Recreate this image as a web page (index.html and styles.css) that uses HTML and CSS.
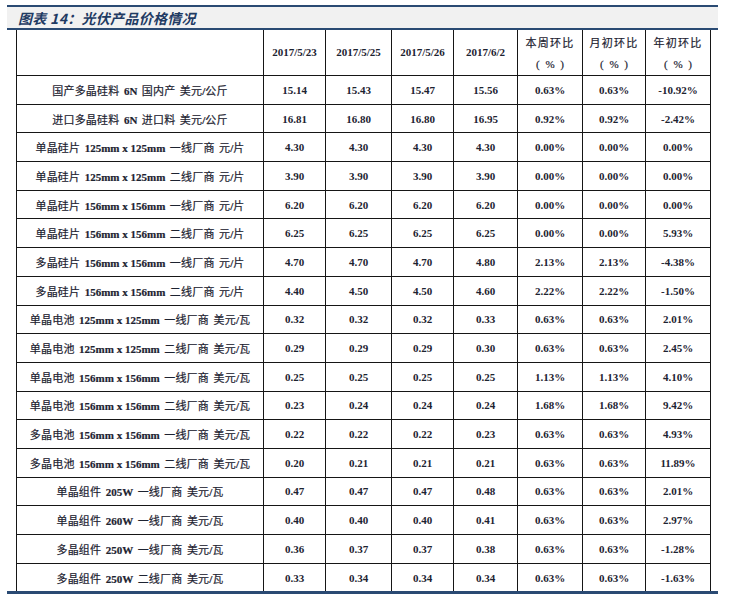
FILE: index.html
```html
<!DOCTYPE html>
<html lang="zh-CN">
<head>
<meta charset="utf-8">
<title>图表14：光伏产品价格情况</title>
<link rel="stylesheet" href="styles.css">
</head>
<body>
<div class="figure">
  <div class="title-band"><span class="title">图表 14：光伏产品价格情况</span></div>
  <table class="prices">
    <colgroup>
      <col class="c-label"><col class="c-d1"><col class="c-d2"><col class="c-d3"><col class="c-d4"><col class="c-p1"><col class="c-p2"><col class="c-p3">
    </colgroup>
    <thead>
      <tr class="head">
        <th></th>
        <th class="num">2017/5/23</th>
        <th class="num">2017/5/25</th>
        <th class="num">2017/5/26</th>
        <th class="num">2017/6/2</th>
        <th class="cn">本周环比<br><span class="pct">( % )</span></th>
        <th class="cn">月初环比<br><span class="pct">( % )</span></th>
        <th class="cn">年初环比<br><span class="pct">( % )</span></th>
      </tr>
    </thead>
    <tbody>
      <tr><td class="label">国产多晶硅料 <b>6N</b> 国内产 美元<b>/</b>公斤</td><td>15.14</td><td>15.43</td><td>15.47</td><td>15.56</td><td>0.63%</td><td>0.63%</td><td>-10.92%</td></tr>
      <tr><td class="label">进口多晶硅料 <b>6N</b> 进口料 美元<b>/</b>公斤</td><td>16.81</td><td>16.80</td><td>16.80</td><td>16.95</td><td>0.92%</td><td>0.92%</td><td>-2.42%</td></tr>
      <tr><td class="label">单晶硅片 <b>125mm x 125mm</b> 一线厂商 元<b>/</b>片</td><td>4.30</td><td>4.30</td><td>4.30</td><td>4.30</td><td>0.00%</td><td>0.00%</td><td>0.00%</td></tr>
      <tr><td class="label">单晶硅片 <b>125mm x 125mm</b> 二线厂商 元<b>/</b>片</td><td>3.90</td><td>3.90</td><td>3.90</td><td>3.90</td><td>0.00%</td><td>0.00%</td><td>0.00%</td></tr>
      <tr><td class="label">单晶硅片 <b>156mm x 156mm</b> 一线厂商 元<b>/</b>片</td><td>6.20</td><td>6.20</td><td>6.20</td><td>6.20</td><td>0.00%</td><td>0.00%</td><td>0.00%</td></tr>
      <tr><td class="label">单晶硅片 <b>156mm x 156mm</b> 二线厂商 元<b>/</b>片</td><td>6.25</td><td>6.25</td><td>6.25</td><td>6.25</td><td>0.00%</td><td>0.00%</td><td>5.93%</td></tr>
      <tr><td class="label">多晶硅片 <b>156mm x 156mm</b> 一线厂商 元<b>/</b>片</td><td>4.70</td><td>4.70</td><td>4.70</td><td>4.80</td><td>2.13%</td><td>2.13%</td><td>-4.38%</td></tr>
      <tr><td class="label">多晶硅片 <b>156mm x 156mm</b> 二线厂商 元<b>/</b>片</td><td>4.40</td><td>4.50</td><td>4.50</td><td>4.60</td><td>2.22%</td><td>2.22%</td><td>-1.50%</td></tr>
      <tr><td class="label">单晶电池 <b>125mm x 125mm</b> 一线厂商 美元<b>/</b>瓦</td><td>0.32</td><td>0.32</td><td>0.32</td><td>0.33</td><td>0.63%</td><td>0.63%</td><td>2.01%</td></tr>
      <tr><td class="label">单晶电池 <b>125mm x 125mm</b> 二线厂商 美元<b>/</b>瓦</td><td>0.29</td><td>0.29</td><td>0.29</td><td>0.30</td><td>0.63%</td><td>0.63%</td><td>2.45%</td></tr>
      <tr><td class="label">单晶电池 <b>156mm x 156mm</b> 一线厂商 美元<b>/</b>瓦</td><td>0.25</td><td>0.25</td><td>0.25</td><td>0.25</td><td>1.13%</td><td>1.13%</td><td>4.10%</td></tr>
      <tr><td class="label">单晶电池 <b>156mm x 156mm</b> 二线厂商 美元<b>/</b>瓦</td><td>0.23</td><td>0.24</td><td>0.24</td><td>0.24</td><td>1.68%</td><td>1.68%</td><td>9.42%</td></tr>
      <tr><td class="label">多晶电池 <b>156mm x 156mm</b> 一线厂商 美元<b>/</b>瓦</td><td>0.22</td><td>0.22</td><td>0.22</td><td>0.23</td><td>0.63%</td><td>0.63%</td><td>4.93%</td></tr>
      <tr><td class="label">多晶电池 <b>156mm x 156mm</b> 二线厂商 美元<b>/</b>瓦</td><td>0.20</td><td>0.21</td><td>0.21</td><td>0.21</td><td>0.63%</td><td>0.63%</td><td>11.89%</td></tr>
      <tr><td class="label">单晶组件 <b>205W</b> 一线厂商 美元<b>/</b>瓦</td><td>0.47</td><td>0.47</td><td>0.47</td><td>0.48</td><td>0.63%</td><td>0.63%</td><td>2.01%</td></tr>
      <tr><td class="label">单晶组件 <b>260W</b> 一线厂商 美元<b>/</b>瓦</td><td>0.40</td><td>0.40</td><td>0.40</td><td>0.41</td><td>0.63%</td><td>0.63%</td><td>2.97%</td></tr>
      <tr><td class="label">多晶组件 <b>250W</b> 一线厂商 美元<b>/</b>瓦</td><td>0.36</td><td>0.37</td><td>0.37</td><td>0.38</td><td>0.63%</td><td>0.63%</td><td>-1.28%</td></tr>
      <tr><td class="label">多晶组件 <b>250W</b> 二线厂商 美元<b>/</b>瓦</td><td>0.33</td><td>0.34</td><td>0.34</td><td>0.34</td><td>0.63%</td><td>0.63%</td><td>-1.63%</td></tr>
    </tbody>
  </table>
  <div class="bottom-rule"></div>
</div>
</body>
</html>
```
FILE: styles.css
```css
html, body {
  margin: 0;
  padding: 0;
  background: #ffffff;
}

.figure {
  margin: 5px 0 0 7px;
  width: 711px;
}

.title-band {
  height: 21px;
  background: #f1f1f1;
  border-top: 2px solid #2a4a73;
  border-bottom: 2px solid #2a4a73;
  display: flex;
  align-items: center;
  padding-left: 11px;
}

.title {
  font-family: "Noto Sans CJK SC", "Liberation Serif", sans-serif;
  font-size: 14px;
  font-style: italic;
  font-weight: 700;
  color: #1f3b63;
  line-height: 1;
  letter-spacing: 0.3px;
}

.prices {
  margin-left: 9px;
  width: 694px;
  border-collapse: collapse;
  table-layout: fixed;
  font-family: "Liberation Serif", "Noto Sans CJK SC", serif;
  font-size: 11px;
  color: #1d2331;
}

.c-label { width: 247px; }
.c-d1 { width: 62px; }
.c-d2 { width: 66px; }
.c-d3 { width: 62px; }
.c-d4 { width: 64px; }
.c-p1 { width: 65px; }
.c-p2 { width: 63px; }
.c-p3 { width: 65px; }

.prices th,
.prices td {
  border: 1px solid #161616;
  padding: 0;
  text-align: center;
  vertical-align: middle;
}

.prices thead th {
  border-top: none;
}

.prices tbody tr:last-child td {
  border-bottom: none;
}

.head th {
  height: 44px;
  font-weight: 700;
  line-height: 21px;
}

.head th.cn {
  font-family: "Noto Sans CJK SC", sans-serif;
  font-weight: 400;
  letter-spacing: 1.2px;
  padding-top: 1px;
  -webkit-text-stroke: 0.2px currentColor;
}

.pct {
  font-family: "Liberation Serif", serif;
  letter-spacing: 0;
  word-spacing: 3px;
}

.prices tbody td {
  height: 27.7px;
  font-weight: 700;
}

.prices tbody td.label {
  font-family: "Liberation Serif", "Noto Sans CJK SC", serif;
  font-weight: 400;
  letter-spacing: 0.2px;
  word-spacing: 1.5px;
  white-space: nowrap;
  -webkit-text-stroke: 0.2px currentColor;
}

.label b {
  font-weight: 700;
  letter-spacing: 0;
  word-spacing: 0;
}

.bottom-rule {
  height: 3px;
  background: #2a4a73;
}
```
